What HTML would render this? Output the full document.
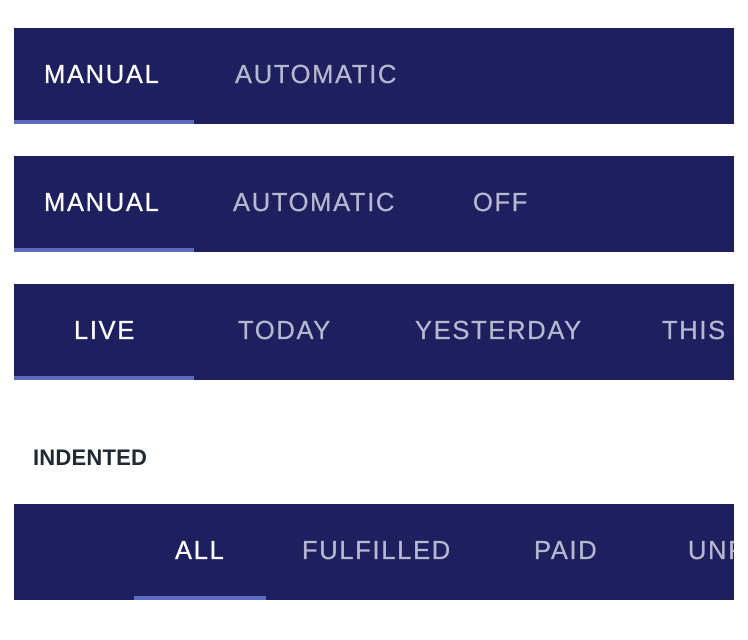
<!DOCTYPE html>
<html><head><style>
body{margin:0;width:748px;height:640px;background:#fff;position:relative;overflow:hidden;font-family:"Liberation Sans",sans-serif}
.bar{position:absolute;left:14px;width:720px;height:96px;background:#1d1f5e;overflow:hidden}
.t{position:absolute;font-size:25.5px;letter-spacing:1.7px;color:#b6b8d0;line-height:30px;white-space:nowrap;top:32px;-webkit-text-stroke:0.3px currentColor}
.a{color:#fff}
.ind{position:absolute;bottom:0;height:4px;background:#5c6bc0}
.h{position:absolute;left:33px;top:445px;font-size:22px;font-weight:bold;color:#1f2933;letter-spacing:0.2px}
</style></head><body>
<div class="bar" style="top:28px">
<span class="t a" style="left:30px">MANUAL</span>
<span class="t" style="left:221px">AUTOMATIC</span>
<div class="ind" style="left:0;width:180px"></div>
</div>
<div class="bar" style="top:156px">
<span class="t a" style="left:30px">MANUAL</span>
<span class="t" style="left:219px">AUTOMATIC</span>
<span class="t" style="left:459px">OFF</span>
<div class="ind" style="left:0;width:180px"></div>
</div>
<div class="bar" style="top:284px">
<span class="t a" style="left:60px">LIVE</span>
<span class="t" style="left:224px">TODAY</span>
<span class="t" style="left:401px">YESTERDAY</span>
<span class="t" style="left:648px">THIS WEEK</span>
<div class="ind" style="left:0;width:180px"></div>
</div>
<div class="h">INDENTED</div>
<div class="bar" style="top:504px">
<span class="t a" style="left:161px">ALL</span>
<span class="t" style="left:288px">FULFILLED</span>
<span class="t" style="left:520px">PAID</span>
<span class="t" style="left:674px">UNPAID</span>
<div class="ind" style="left:120px;width:132px"></div>
</div>
</body></html>
